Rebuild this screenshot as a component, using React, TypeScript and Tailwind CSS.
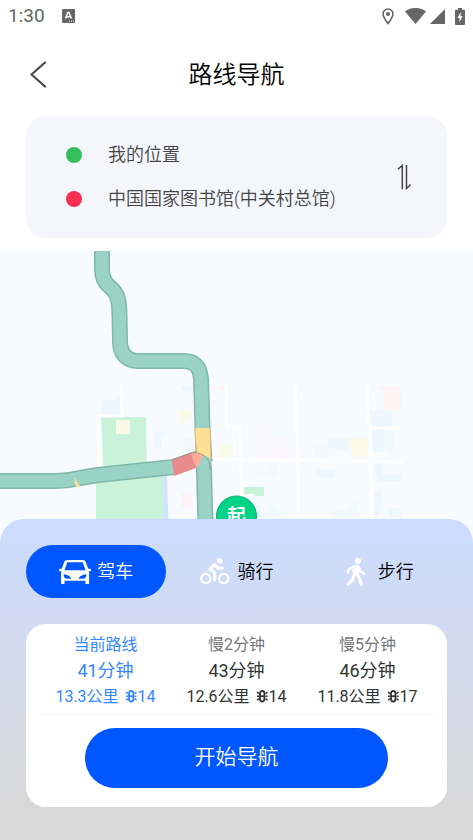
import { useState, type ReactNode } from "react";
import clsx from "clsx";

type Mode = "drive" | "ride" | "walk";

interface Route {
    label: string;
    time: string;
    distance: string;
    lights: number;
}

const ROUTES: Route[] = [
    { label: "当前路线", time: "41分钟", distance: "13.3公里", lights: 14 },
    { label: "慢2分钟", time: "43分钟", distance: "12.6公里", lights: 14 },
    { label: "慢5分钟", time: "46分钟", distance: "11.8公里", lights: 17 },
];

const MODES: { id: Mode; label: string; icon: ReactNode }[] = [
    { id: "drive", label: "驾车", icon: <CarIcon /> },
    { id: "ride", label: "骑行", icon: <BikeIcon /> },
    { id: "walk", label: "步行", icon: <WalkIcon /> },
];

// Shared by the rim and the fill of the northern branch.
const NORTH_ROAD =
    "M102-4v22c0 8 2 13 7 17 6 5 9 9 10 19l.5 10 .5 26c0 12 6 20 18 20h45c12 0 17 6 18 18l1.500 49 2 34";

function CarIcon() {
    return (
        <svg width="32" height="24" viewBox="0 0 32 24" fill="currentColor" aria-hidden="true">
            <path
                fillRule="evenodd"
                d="M8 0h16c1.4 0 2.3.7 2.8 2l2.4 6.8h1.6c.7 0 1.2.5 1.2 1.2 0 .8-.5 1.3-1.2 1.3h-1.3c.4.6.6 1.3.6 2V23c0 .6-.4 1-1 1h-1.7c-.6 0-1-.4-1-1v-2.200h-20.800V23c0 .6-.4 1-1 1H3c-.6 0-1-.4-1-1v-9.700c0-.7.200-1.400.6-2H1.200C.5 11.300 0 10.800 0 10c0-.7.500-1.200 1.200-1.200h1.600L5.200 2C5.700.7 6.600 0 8 0zM8.300 2.200 5.500 10.300h21L23.700 2.200zM4.700 14.200c-.3 2.900 1 4.500 4 4.500h3.500c-.6-2.400-3.500-4.200-7.500-4.500zM27.300 14.200c-4 .3-6.900 2.100-7.500 4.500h3.500c3 0 4.300-1.600 4-4.500z"
            />
        </svg>
    );
}

function BikeIcon() {
    return (
        <svg width="30" height="27" viewBox="0 0 30 27" fill="none" stroke="currentColor" aria-hidden="true">
            <circle cx="5.800" cy="20.500" r="4.600" strokeWidth="2.300" />
            <circle cx="23.700" cy="20.500" r="4.600" strokeWidth="2.300" />
            <circle cx="19.700" cy="2.800" r="2.800" fill="currentColor" stroke="none" />
            <path d="M14.500 6.800 10 11l4.700 3.800V21.500" strokeWidth="3.300" strokeLinejoin="round" strokeLinecap="round" />
            <path d="m14.500 6.800 3.500 3.400h4.500" strokeWidth="2.800" strokeLinejoin="round" strokeLinecap="round" />
        </svg>
    );
}

function WalkIcon() {
    return (
        <svg width="20" height="28" viewBox="0 0 20 28" fill="none" stroke="currentColor" strokeLinecap="round" strokeLinejoin="round" aria-hidden="true">
            <circle cx="12" cy="3" r="3" fill="currentColor" stroke="none" />
            <path d="M8.500 8.500h3.500l1 2L11.500 16 9 16.500 7.800 14z" fill="currentColor" strokeWidth="3" />
            <path d="M8 8.500 3 11 1.700 14.700M13 9.500l1.700 4.200 3.500 2" strokeWidth="2.500" />
            <path d="m8.500 16-2 6L2.200 26.200M11 16l2.800 5 1.300 5.300" strokeWidth="3" />
        </svg>
    );
}

function TrafficLightIcon() {
    return (
        <svg width="13" height="14" viewBox="0 0 13 14" fill="none" stroke="currentColor" aria-hidden="true">
            <rect x="4" y="1" width="4.400" height="10.500" rx="2.200" strokeWidth="1.800" />
            <path d="M4 6.200h4.400" strokeWidth="1.800" />
            <path d="M1 2.200 3 3.700M1 6.200h2M1 10.200 3 8.700M11.500 2.200l-2 1.500M11.500 6.200h-2M11.500 10.200l-2-1.500" strokeWidth="1.500" />
        </svg>
    );
}

function StatusBar() {
    return (
        <div className="flex h-8 items-center justify-between px-2 text-[#666]">
            <div className="flex items-center gap-[17px]">
                <span className="text-[19px] leading-8 font-normal">1:30</span>
                <svg width="13" height="14" viewBox="0 0 13 14" aria-hidden="true">
                    <rect width="13" height="14" rx="1" fill="currentColor" />
                    <path d="m3.500 9.500 2.500-6h1l2.500 6M4.500 7.700h4" fill="none" stroke="#fff" strokeWidth="1.500" />
                    <path d="M7 12.200h1M9 12.200h1M11 12.200h1" stroke="#fff" strokeWidth="1" />
                </svg>
            </div>
            <div className="flex items-center">
                <svg width="12" height="17" viewBox="0 0 12 17" fill="none" stroke="currentColor" aria-hidden="true">
                    <path d="M6 15.500C3.500 12 1 9 1 6a5 5 0 0 1 10 0c0 3-2.500 6-5 9.500z" strokeWidth="1.600" />
                    <circle cx="6" cy="6" r="2" fill="currentColor" stroke="none" />
                </svg>
                <svg className="ml-[11px]" width="21" height="16" viewBox="0 0 21 16" fill="currentColor" aria-hidden="true">
                    <path d="M10.500 16 0 3.500C6-1.200 15-1.200 21 3.500z" />
                </svg>
                <svg className="ml-1" width="15" height="15" viewBox="0 0 15 15" fill="currentColor" aria-hidden="true">
                    <path d="M15 0v15H0z" />
                </svg>
                <svg className="ml-[10px]" width="10" height="17" viewBox="0 0 10 17" aria-hidden="true">
                    <path d="M3 0h4v1.700h2c.6 0 1 .4 1 1V16c0 .6-.4 1-1 1H1c-.6 0-1-.4-1-1V2.700c0-.6.400-1 1-1h2z" fill="currentColor" />
                    <path d="M5.700 4 2.500 10h2v4l3.200-6h-2z" fill="#fff" />
                </svg>
            </div>
        </div>
    );
}

function RouteMap() {
    return (
        <svg
            className="mt-[13px] block h-[292px] w-full bg-[#f7fbff]"
            viewBox="0 0 473 292"
            preserveAspectRatio="xMidYMin slice"
            role="img"
            aria-label="路线地图"
        >
            {/* buildings and parks */}
            <path d="M101 166h45l1 58h-43zM96 228l68-5v70H96z" fill="#c9f3d9" />
            <path d="M116 169h14v14h-14z" fill="#f9f9e5" />
            <path d="M163 223h4l2 70h-5z" fill="#cfe4ff" />
            <path d="M101 149h15v-5h5v20h-20zM181 135h11v4l-7 4zM155 180h10v6l-4 2v9h-6zM370 159h22v17h-22zM371 178h14v23h-14zM328 187h20v13l-20-3zM316 219h19v8h-19zM372 213h11v10h18v7h-23zM374 241h8v10l-4 16h-4zM389 257h12v9h-12z" fill="#eef7ff" />
            <path d="M184 187h11v13h-11zM314 194h14v13h-14zM256 220h13v-7h8v11h-21z" fill="#f3f8fc" />
            <path d="M179 160h12v6l-7 3-3 5-2-3zM218 193h15v15h-14zM348 187h20v18l-5 2h-9l-4-9-2-1zM96 198h2v20h-2z" fill="#fafae8" />
            <path d="M213 135h12v8l-5-4zM376 135h25v23h-17v-18zM181 242h11v14h-11z" fill="#fff4f4" />
            <path d="M264 175l4-4 2 14 12 3v12h13v8h-33z" fill="#fbf6ff" />
            <path d="M385 178h8v26h-5zM267 252h7v5l8 2v5l-15 2zM334 259h15v-8h10v15h-25zM256 255h9v12h-9z" fill="#f0fafa" />
            <path d="M244 236h20v9h-8l-2-2h-10z" fill="#c9f3d9" />
            {/* side streets */}
            <path
                d="M121 134l1 31H99v52M226 134l1 43h13l2 90M295 134l3 75 1 60M367 134l1 31 2 10 2 94M205 208l197 3M370 177h31"
                fill="none"
                stroke="#fff"
                strokeWidth="3"
            />
            {/* the route, a dark rim below a lighter fill */}
            <g fill="none" strokeLinejoin="round">
                <g stroke="#7fb8a8" strokeWidth="16">
                    <path d={NORTH_ROAD} />
                    <path d="M-4 230h60c12 0 16-1 24-3l18-3 76-8 22-8c5-1 8 3 8 10l2 75" />
                </g>
                <g stroke="#9ad2c5" strokeWidth="13">
                    <path d={NORTH_ROAD} />
                    <path d="M-4 230h60c12 0 16-1 24-3l18-3 76-8M203 208c1 3 1 6 1 10l2 75" />
                </g>
            </g>
            <path d="M195 177h15l1 31-7-4-7-2z" fill="#ffdf94" />
            <path d="M195 177l1 26M210 177l1 31" stroke="#d9bd78" />
            <path d="M172 209l19-7 5 15-22 8z" fill="#e98b8c" />
            <path d="M191 202c5-1 9 0 12 3l-6 12-3-5z" fill="#ffab9b" />
            <path d="M172 209l19-7c5-1 9 0 12 2s7 5 7 14" fill="none" stroke="#a8756d" strokeOpacity=".6" />
            <path d="M74 226l6 9-4 2z" fill="#ffdf94" />
            {/* start marker */}
            <circle cx="236.500" cy="265" r="20" fill="#00d385" stroke="#0dac70" />
            <text x="236.500" y="272" textAnchor="middle" fill="#fff" className="text-[19px] font-bold">
                起
            </text>
        </svg>
    );
}

export default function App() {
    const [mode, setMode] = useState<Mode>("drive");
    const [selected, setSelected] = useState(0);
    const [places, setPlaces] = useState(["我的位置", "中国国家图书馆(中关村总馆)"]);

    return (
        <div className="min-h-screen bg-white font-[Roboto,'Noto_Sans_CJK_SC',sans-serif]">
            <StatusBar />

            <header className="grid h-[84px] grid-cols-[1fr_auto_1fr] items-center px-[26px] pt-px">
                <button type="button" aria-label="返回" className="flex h-10 w-10 items-center pl-1 text-[#4a4a4a]">
                    <svg width="17" height="27" viewBox="0 0 17 27" fill="none" stroke="currentColor" strokeWidth="2.300" strokeLinecap="round" strokeLinejoin="round" aria-hidden="true">
                        <path d="M15 1.500 1.500 13.500 15 25.500" />
                    </svg>
                </button>
                <h1 className="text-2xl font-[350] text-black">路线导航</h1>
            </header>

            <section className="mx-[26px] flex items-center justify-between rounded-[20px] bg-[#f4f6fb] py-[17px] pr-[31px] pl-10">
                <ul className="text-lg font-[350] text-[#444]">
                    {places.map((place, i) => (
                        <li key={place} className="flex h-11 items-center gap-[26px]">
                            <span className={clsx("h-4 w-4 flex-none rounded-full", i === 0 ? "bg-[#35bf5c]" : "bg-[#f72f50]")} />
                            {place}
                        </li>
                    ))}
                </ul>
                <button
                    type="button"
                    aria-label="交换起点和终点"
                    className="flex h-10 w-6 items-center justify-center text-[#444]"
                    onClick={() => setPlaces([places[1], places[0]])}
                >
                    <svg width="15" height="26" viewBox="0 0 15 26" fill="none" stroke="currentColor" aria-hidden="true">
                        <path d="M1 5.200 5.300 1.500V25" strokeWidth="1.500" />
                        <path d="M9.500 1v23.500l4.200-4" strokeWidth="1.500" />
                    </svg>
                </button>
            </section>

            <RouteMap />

            <main className="relative -mt-6 rounded-t-[24px] bg-linear-to-b from-[#ccdcff] to-[#d8d8d8] to-90% px-[26px] pt-[26px] pb-[33px]">
                <div className="grid grid-cols-3" role="group" aria-label="出行方式">
                    {MODES.map((m) => (
                        <button
                            key={m.id}
                            type="button"
                            aria-pressed={mode === m.id}
                            onClick={() => setMode(m.id)}
                            className={clsx(
                                "flex h-[53px] items-center justify-center gap-1.5 rounded-full text-lg font-[350]",
                                mode === m.id ? "bg-[#0057ff] text-white" : "text-black",
                            )}
                        >
                            <span className="flex w-8 justify-center text-white">{m.icon}</span>
                            {m.label}
                        </button>
                    ))}
                </div>

                <section className="mt-[26px] rounded-[20px] bg-white px-[14px] pt-2 pb-[19px]">
                    <div className="grid grid-cols-3 border-b border-[#f5f5f5] pb-1">
                        {ROUTES.map((r, i) => (
                            <button
                                key={r.label}
                                type="button"
                                aria-pressed={selected === i}
                                onClick={() => setSelected(i)}
                                className={clsx(
                                    "flex flex-col items-center text-base leading-[26px] whitespace-nowrap",
                                    selected === i ? "text-[#3388ff]" : "text-[#333]",
                                )}
                            >
                                <span className={clsx(selected !== i && "text-[#777]")}>{r.label}</span>
                                <span className="text-lg leading-[26px]">{r.time}</span>
                                <span className="flex items-center">
                                    <span className="mr-1.5">{r.distance}</span>
                                    <TrafficLightIcon />
                                    {r.lights}
                                </span>
                            </button>
                        ))}
                    </div>
                    <div className="px-[45px] pt-[13px]">
                        <button type="button" className="h-[60px] w-full rounded-full bg-[#0057ff] text-[21px] font-[350] text-white">
                            开始导航
                        </button>
                    </div>
                </section>
            </main>
        </div>
    );
}
